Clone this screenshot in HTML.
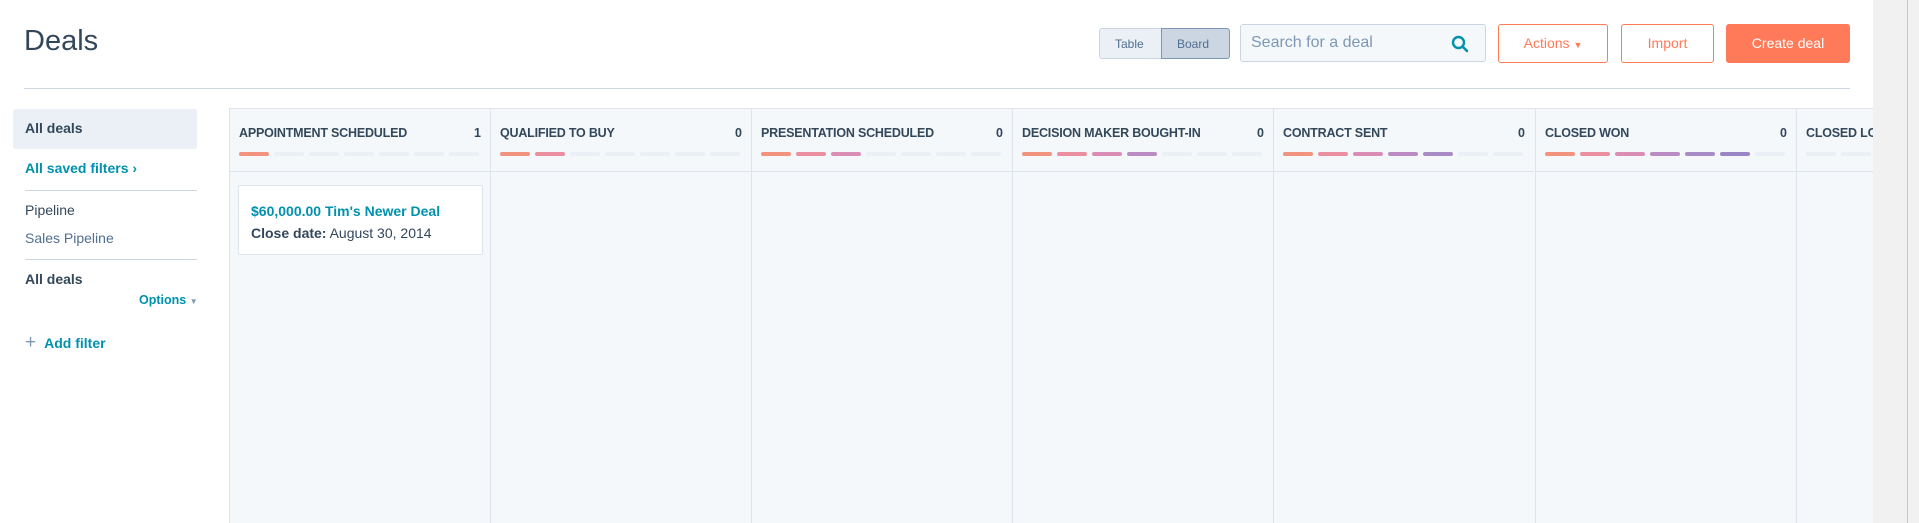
<!DOCTYPE html>
<html><head><meta charset="utf-8"><style>
*{box-sizing:border-box;margin:0;padding:0}
body{width:1919px;height:523px;overflow:hidden;background:#fff;font-family:"Liberation Sans",sans-serif;color:#33475b;position:relative}
.a{position:absolute}
.t{white-space:nowrap}
.col{position:absolute;top:109px;height:414px;width:261px;border-left:1px solid #dfe3eb;background:#f5f8fa}
.hd{height:63px;border-bottom:1px solid #dfe3eb;position:relative}
.hd .n{position:absolute;left:9px;top:17px;font-size:12.5px;font-weight:bold;color:#33475b;letter-spacing:-0.2px}
.hd .c{position:absolute;right:9px;top:17px;font-size:12.5px;font-weight:bold}
.bars{position:absolute;left:9px;top:43px;display:flex;gap:5px}
.bars i{display:block;width:30px;height:4px;border-radius:2px;background:#eaf0f6}
</style></head><body>
<div class="a t" style="left:24px;top:25px;font-size:29px;font-weight:300;color:#33475b">Deals</div>
<div class="a" style="left:1099px;top:28px;width:130px;height:31px;border:1px solid #cbd6e2;border-radius:3px;background:#eaf0f6;font-size:12px;color:#516f90">
<span class="a" style="left:15px;top:8px">Table</span>
<div class="a" style="left:61px;top:-1px;width:69px;height:31px;background:#cbd6e2;border:1px solid #7c98b6;border-radius:0 3px 3px 0"><span class="a" style="left:15px;top:8px">Board</span></div></div>
<div class="a" style="left:1240px;top:24px;width:246px;height:38px;border:1px solid #cbd6e2;border-radius:3px;background:#f5f8fa">
<span class="a t" style="left:10px;top:9px;font-size:16px;color:#7c98b6">Search for a deal</span>
<svg class="a" style="left:210px;top:10px" width="18" height="18" viewBox="0 0 18 18"><circle cx="7.5" cy="7.5" r="5.5" fill="none" stroke="#0091ae" stroke-width="2.4"/><path d="M11.5 11.5 L16 16" stroke="#0091ae" stroke-width="2.6" stroke-linecap="round"/></svg></div>
<div class="a" style="left:1498px;top:24px;width:110px;height:39px;border:1px solid #ff7a59;border-radius:3px;color:#ff7a59;font-size:14px;text-align:center;line-height:37px">Actions <span style="font-size:9px">▼</span></div>
<div class="a" style="left:1621px;top:24px;width:93px;height:39px;border:1px solid #ff7a59;border-radius:3px;color:#ff7a59;font-size:14px;text-align:center;line-height:37px">Import</div>
<div class="a" style="left:1726px;top:24px;width:124px;height:39px;background:#ff7a59;border-radius:3px;color:#fff;font-size:14px;text-align:center;line-height:39px">Create deal</div>
<div class="a" style="left:24px;top:88px;width:1826px;height:1px;background:#cbd6e2"></div>
<div class="a" style="left:1873px;top:0;width:46px;height:523px;background:#f1f1f1"></div>
<div class="a" style="left:1907px;top:0;width:1px;height:523px;background:#c8c8c8"></div>
<div class="a" style="left:13px;top:109px;width:184px;height:40px;background:#eaf0f6;border-radius:3px"></div>
<div class="a t" style="left:25px;top:120px;font-size:14px;font-weight:bold">All deals</div>
<div class="a t" style="left:25px;top:160px;font-size:14px;font-weight:bold;color:#0091ae">All saved filters ›</div>
<div class="a" style="left:25px;top:190px;width:172px;height:1px;background:#cbd6e2"></div>
<div class="a t" style="left:25px;top:202px;font-size:14px">Pipeline</div>
<div class="a t" style="left:25px;top:230px;font-size:14px;color:#516f90">Sales Pipeline</div>
<div class="a" style="left:25px;top:259px;width:172px;height:1px;background:#cbd6e2"></div>
<div class="a t" style="left:25px;top:271px;font-size:14px;font-weight:bold">All deals</div>
<div class="a t" style="left:139px;top:293px;font-size:12.5px;font-weight:bold;color:#0091ae">Options <span style="color:#7c98b6;font-size:8px">▼</span></div>
<div class="a t" style="left:25px;top:332px;font-size:14px;font-weight:bold;color:#0091ae"><span style="color:#7c98b6;font-weight:normal;font-size:19px;margin-right:8px">+</span>Add filter</div>
<div class="a" style="left:229px;top:108px;width:1644px;height:415px;background:#f5f8fa;border-top:1px solid #dfe3eb"></div>
<div class="col" style="left:229px"><div class="hd"><span class="n">APPOINTMENT SCHEDULED</span><span class="c">1</span><div class="bars"><i style="background:#f2937f"></i><i></i><i></i><i></i><i></i><i></i><i></i></div></div>
<div class="a" style="left:8px;top:76px;width:245px;height:70px;background:#fff;border:1px solid #dfe3eb;border-radius:2px">
<div class="a t" style="left:12px;top:17px;font-size:14px;font-weight:bold;color:#0091ae">$60,000.00 Tim's Newer Deal</div>
<div class="a t" style="left:12px;top:39px;font-size:14px"><b>Close date:</b> August 30, 2014</div></div></div>
<div class="col" style="left:490px"><div class="hd"><span class="n">QUALIFIED TO BUY</span><span class="c">0</span><div class="bars"><i style="background:#f2937f"></i><i style="background:#ea8ea0"></i><i></i><i></i><i></i><i></i><i></i></div></div></div>
<div class="col" style="left:751px"><div class="hd"><span class="n">PRESENTATION SCHEDULED</span><span class="c">0</span><div class="bars"><i style="background:#f2937f"></i><i style="background:#ea8ea0"></i><i style="background:#db8db6"></i><i></i><i></i><i></i><i></i></div></div></div>
<div class="col" style="left:1012px"><div class="hd"><span class="n">DECISION MAKER BOUGHT-IN</span><span class="c">0</span><div class="bars"><i style="background:#f2937f"></i><i style="background:#ea8ea0"></i><i style="background:#db8db6"></i><i style="background:#bb8cc3"></i><i></i><i></i><i></i></div></div></div>
<div class="col" style="left:1273px"><div class="hd"><span class="n">CONTRACT SENT</span><span class="c">0</span><div class="bars"><i style="background:#f2937f"></i><i style="background:#ea8ea0"></i><i style="background:#db8db6"></i><i style="background:#bb8cc3"></i><i style="background:#a98bc5"></i><i></i><i></i></div></div></div>
<div class="col" style="left:1535px"><div class="hd"><span class="n">CLOSED WON</span><span class="c">0</span><div class="bars"><i style="background:#f2937f"></i><i style="background:#ea8ea0"></i><i style="background:#db8db6"></i><i style="background:#bb8cc3"></i><i style="background:#a98bc5"></i><i style="background:#9a86c4"></i><i></i></div></div></div>
<div class="col" style="left:1796px;width:77px;overflow:hidden"><div class="hd" style="width:261px"><span class="n">CLOSED LOST</span><div class="bars"><i></i><i></i><i></i></div></div></div>
</body></html>
